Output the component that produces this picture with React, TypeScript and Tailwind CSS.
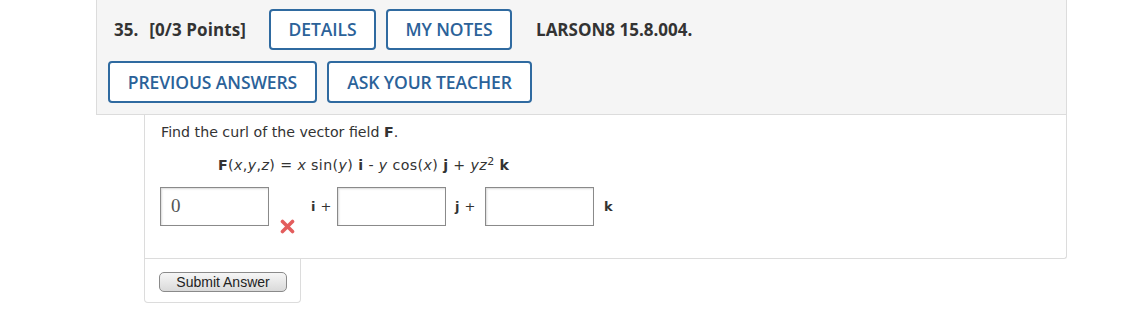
import React from "react";

const blueBtn =
  "h-[41px] border-2 border-[#2f6aa0] rounded-[4px] text-[#2b6299] text-[17.5px] font-semibold bg-white flex items-center justify-center tracking-[-0.1px]";

function Box({ value }: { value?: string }) {
  return (
    <div className="w-[109px] h-[39px] border border-[#8a8a8a] bg-white shadow-[inset_1px_1px_2px_rgba(0,0,0,0.15)] flex items-center pl-[10px] text-[19px] text-[#555] [font-family:'Liberation_Serif',serif]">
      {value}
    </div>
  );
}

export default function App() {
  return (
    <div className="w-[1125px] h-[310px] bg-white overflow-hidden [font-family:'Open_Sans',sans-serif]">
      <div className="ml-[96px] w-[971px]">
        {/* header */}
        <div className="h-[115px] bg-[#f5f5f5] border-l border-r border-b border-[#dcdcdc] pl-[11px] pt-[9px]">
          <div className="flex items-center h-[41px]">
            <span className="ml-[6px] text-[17px] font-bold text-[#333]">35.</span>
            <span className="ml-[11px] text-[17px] font-bold text-[#333] tracking-[0.1px]">[0/3 Points]</span>
            <button className={blueBtn + " ml-[23px] w-[107px]"}>DETAILS</button>
            <button className={blueBtn + " ml-[10px] w-[126px]"}>MY NOTES</button>
            <span className="ml-[24px] text-[17px] font-bold text-[#333]">LARSON8 15.8.004.</span>
          </div>
          <div className="flex items-center mt-[11px]">
            <button className={blueBtn + " w-[209px] h-[42px]"}>PREVIOUS ANSWERS</button>
            <button className={blueBtn + " ml-[10px] w-[205px] h-[42px]"}>ASK YOUR TEACHER</button>
          </div>
        </div>
        {/* content */}
        <div className="ml-[48px] w-[923px] h-[144px] border-l border-r border-b border-[#dcdcdc] rounded-br-[3px] bg-white [font-family:'DejaVu_Sans',Verdana,sans-serif] text-[#333] text-[14.2px]">
          <div className="pl-[16px] pt-[9px] leading-[17px]">
            Find the curl of the vector field <b>F</b>.
          </div>
          <div className="pl-[73px] pt-[16px] leading-[17px] tracking-[0.4px]">
            <b>F</b>(<i>x</i>,<i>y</i>,<i>z</i>) = <i>x</i> sin(<i>y</i>) <b>i</b> - <i>y</i> cos(<i>x</i>) <b>j</b> + <i>yz</i>
            <sup className="text-[11px]">2</sup> <b>k</b>
          </div>
          <div className="flex items-start pl-[15px] pt-[13px]">
            <Box value="0" />
            <div className="w-[42px] h-[47px] relative">
              <svg className="absolute left-[11px] top-[32px]" width="15" height="15" viewBox="0 0 15 15">
                <path d="M2.5 2.5 L12.5 12.5 M12.5 2.5 L2.5 12.5" stroke="#e35d5d" strokeWidth="3.6" strokeLinecap="round" />
              </svg>
            </div>
            <div className="h-[39px] flex items-center w-[26px] text-[13px]">
              <b>i</b>
              <span className="ml-[5px]">+</span>
            </div>
            <Box />
            <div className="h-[39px] flex items-center pl-[9px] w-[39px] text-[13px]">
              <b>j</b>
              <span className="ml-[5px]">+</span>
            </div>
            <Box />
            <div className="h-[39px] flex items-center pl-[10px] text-[13px]">
              <b>k</b>
            </div>
          </div>
        </div>
        <div className="ml-[48px] w-[157px] h-[44px] border-l border-r border-b border-[#dcdcdc] rounded-b-[4px] bg-white pl-[14px] pt-[13px]">
          <button className="w-[128px] h-[20px] rounded-[5px] border border-[#8a8a8a] bg-gradient-to-b from-[#f6f6f6] to-[#dadada] text-[14px] leading-[18px] text-[#222] [font-family:'Liberation_Sans',Arial,sans-serif] flex items-center justify-center">
            Submit Answer
          </button>
        </div>
      </div>
    </div>
  );
}
